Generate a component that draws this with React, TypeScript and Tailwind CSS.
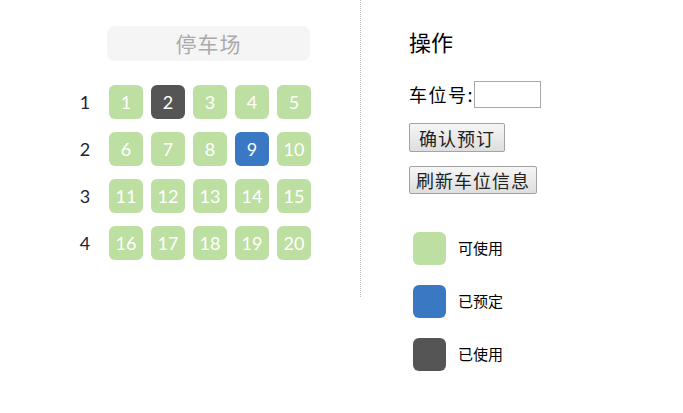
const seats: { n: number; status: "free" | "booked" | "used" }[][] = [
  [1, 2, 3, 4, 5],
  [6, 7, 8, 9, 10],
  [11, 12, 13, 14, 15],
  [16, 17, 18, 19, 20],
].map((row) =>
  row.map((n) => ({
    n,
    status: n === 2 ? "used" : n === 9 ? "booked" : "free",
  }))
);

const tileColor = {
  free: "bg-[#bddfa2]",
  booked: "bg-[#3a78c3]",
  used: "bg-[#555555]",
};

const cjk = "font-['Noto_Sans_CJK_SC','Noto_Sans',sans-serif]";

function Legend({ color, label }: { color: string; label: string }) {
  return (
    <div className="flex h-[33px] items-center">
      <div className={`h-[33px] w-[33px] rounded-md ${color}`} />
      <span className={`ml-[12px] text-[15px] text-black ${cjk}`}>{label}</span>
    </div>
  );
}

export default function App() {
  return (
    <div className="flex h-[413px] w-[683px] bg-white">
      <div className="h-[297px] w-[361px] border-r border-dotted border-[#bbbbbb] pt-[26px]">
        <div
          className={`ml-[107px] flex h-[35px] w-[203px] items-center justify-center rounded-lg bg-[#f5f5f5] text-[21px] tracking-[1px] text-[#aaaaaa] ${cjk}`}
        >
          停车场
        </div>
        <div className="mt-[24px] flex flex-col gap-[13px] pl-[61px]">
          {seats.map((row, i) => (
            <div key={i} className="flex h-[34px] items-center">
              <div className="w-[48px] text-center font-['Lato',sans-serif] text-[18px] text-[#1c2536]">
                {i + 1}
              </div>
              <div className="flex gap-2">
                {row.map((s) => (
                  <div
                    key={s.n}
                    className={`flex h-[34px] w-[34px] items-center justify-center rounded-md font-['Lato',sans-serif] text-[18px] text-white ${tileColor[s.status]}`}
                  >
                    {s.n}
                  </div>
                ))}
              </div>
            </div>
          ))}
        </div>
      </div>

      <div className={`flex flex-col pl-[48px] text-black ${cjk}`}>
        <h2 className="mt-[26px] h-[30px] text-[22px] leading-[30px]">操作</h2>
        <div className="mt-[25px] flex h-[27px] items-center text-[18px]">
          <span className="tracking-[1.5px]">车位号:</span>
          <input
            type="text"
            className="h-[27px] w-[67px] border border-[#a9a9a9] bg-white outline-none"
          />
        </div>
        <button className="mt-[15px] h-[29px] w-[96px] rounded-[2px] border border-[#a3a3a3] bg-gradient-to-b from-[#f6f6f6] to-[#dedede] text-[18px] leading-none tracking-[1px] text-[#222]">
          确认预订
        </button>
        <button className="mt-[14px] h-[28px] w-[128px] rounded-[2px] border border-[#a3a3a3] bg-gradient-to-b from-[#f6f6f6] to-[#dedede] text-[18px] leading-none tracking-[1px] text-[#222]">
          刷新车位信息
        </button>
        <div className="mt-[38px] flex flex-col gap-[20px] pl-[4px]">
          <Legend color="bg-[#bddfa2]" label="可使用" />
          <Legend color="bg-[#3a78c3]" label="已预定" />
          <Legend color="bg-[#555555]" label="已使用" />
        </div>
      </div>
    </div>
  );
}
